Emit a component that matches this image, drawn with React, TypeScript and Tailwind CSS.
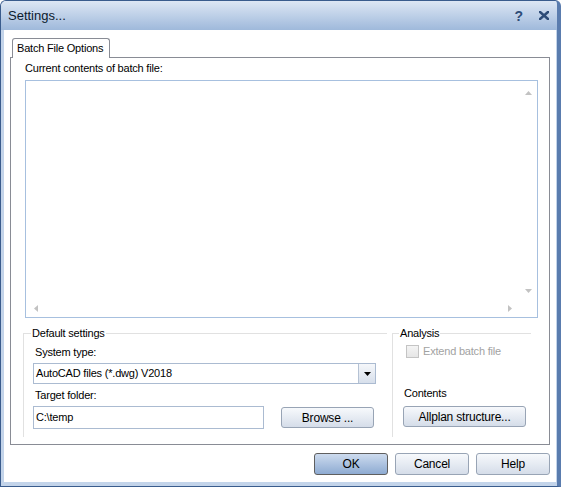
import React from "react";

const font = "font-['Liberation_Sans',Arial,sans-serif]";

function Arrow({ dir, className }: { dir: "up" | "down" | "left" | "right"; className?: string }) {
  const pts = {
    up: "0,4 3.5,0 7,4",
    down: "0,0 7,0 3.5,4",
    left: "4,0 4,7 0,3.5",
    right: "0,0 0,7 4,3.5",
  }[dir];
  const vertical = dir === "up" || dir === "down";
  return (
    <svg
      width={vertical ? 7 : 4}
      height={vertical ? 4 : 7}
      viewBox={vertical ? "0 0 7 4" : "0 0 4 7"}
      className={className}
    >
      <polygon points={pts} fill="currentColor" />
    </svg>
  );
}

function Button({
  children,
  primary,
  className = "",
}: {
  children: React.ReactNode;
  primary?: boolean;
  className?: string;
}) {
  return (
    <button
      className={`flex items-center justify-center rounded-[3px] border text-[12px] tracking-[-0.2px] text-black ${
        primary
          ? "border-[#5f5f5f] bg-linear-to-b from-[#cddbee] to-[#8eabd2]"
          : "border-[#98a4b5] bg-linear-to-b from-[#f7f9fc] to-[#d5dde9]"
      } ${className}`}
    >
      {children}
    </button>
  );
}

export default function App() {
  return (
    <div
      className={`${font} flex h-[487px] w-[561px] flex-col overflow-hidden rounded-t-[6px] border-x border-t border-b border-[#3a5c8d] border-r-[4px] border-r-[#5a7cae] bg-[#c3d4ea] text-[11px] tracking-[-0.2px] text-black`}
    >
      {/* title bar */}
      <div className="flex h-[29px] shrink-0 items-center bg-linear-to-b from-[#dde7f4] to-[#9fb9db] pl-[7px]">
        <span className="text-[13px] tracking-normal text-[#0b1a2e]">Settings...</span>
        <div className="ml-auto flex items-center gap-[16px] pr-[8px]">
          <span className="text-[14px] font-bold leading-none tracking-normal text-[#2e4c78]">?</span>
          <svg width="10" height="9" viewBox="0 0 10 9">
            <path d="M1 1 L9 8 M9 1 L1 8" stroke="#2e4c78" strokeWidth="2.6" strokeLinecap="square" />
          </svg>
        </div>
      </div>

      {/* client */}
      <div className="ml-[3px] mr-[1px] mb-[4px] flex h-[452px] flex-col bg-white">
        <div className="ml-[8px] mt-[8px] flex">
          <div className="relative z-10 flex h-[20px] w-[98px] items-center rounded-t-[3px] border-x border-t border-[#898c95] bg-white pl-[4px]">
            Batch File Options
          </div>
        </div>

        <div className="mx-[6px] -mt-[1px] flex h-[388px] flex-col border border-[#898c95] pl-[14px] pr-[11px] pt-[4px]">
          <div className="h-[13px] leading-[13px]">Current contents of batch file:</div>

          <div className="mt-[5px] grid h-[238px] grid-cols-[1fr_17px] grid-rows-[1fr_17px] border border-[#a7c0df]">
            <div />
            <div className="flex flex-col items-center justify-between pb-[7px] pt-[10px] text-[#c2c2c2]">
              <Arrow dir="up" />
              <Arrow dir="down" />
            </div>
            <div className="flex items-center justify-between pl-[8px] pr-[8px] text-[#c2c2c2]">
              <Arrow dir="left" />
              <Arrow dir="right" />
            </div>
            <div />
          </div>

          <div className="-ml-[2px] mt-[9px] flex">
            <fieldset className="h-[110px] w-[364px] border-l border-t border-[#e1e1e1] pl-[9px]">
              <legend className="-ml-[2px] px-[1px] leading-[13px]">Default settings</legend>
              <div className="mt-[6px] h-[13px] pl-[2px] leading-[13px]">System type:</div>
              <div className="mt-[4px] flex h-[21px] w-[343px] border border-[#abbbd1]">
                <div className="flex flex-1 items-center pl-[2px]">AutoCAD files (*.dwg) V2018</div>
                <div className="flex w-[17px] items-center justify-center border-l border-[#b5c2d4] bg-linear-to-b from-[#f5f7fa] to-[#d7dfeb] text-black">
                  <Arrow dir="down" />
                </div>
              </div>
              <div className="mt-[5px] h-[13px] pl-[2px] leading-[13px]">Target folder:</div>
              <div className="mt-[4px] flex items-start">
                <div className="flex h-[23px] w-[231px] items-center border border-[#abbbd1] pl-[2px]">C:\temp</div>
                <Button className="ml-[17px] mt-[1px] h-[21px] w-[93px]">Browse ...</Button>
              </div>
            </fieldset>

            <fieldset className="ml-[5px] h-[110px] w-[139px] border-l border-t border-[#e1e1e1] pl-[10px]">
              <legend className="-ml-[4px] px-[1px] leading-[13px]">Analysis</legend>
              <div className="mt-[5px] flex h-[13px] items-center">
                <div className="ml-[3px] h-[13px] w-[13px] border border-[#c4c4c4] bg-linear-to-b from-[#f4f4f4] to-[#e6e6e6]" />
                <span className="ml-[4px] leading-[13px] text-[#a2a2a2]">Extend batch file</span>
              </div>
              <div className="ml-[1px] mt-[29px] h-[13px] leading-[13px]">Contents</div>
              <Button className="mt-[6px] h-[21px] w-[123px]">Allplan structure...</Button>
            </fieldset>
          </div>
        </div>

        <div className="mr-[6px] mt-[8px] flex justify-end gap-[7px]">
          <Button primary className="h-[22px] w-[74px]">
            OK
          </Button>
          <Button className="h-[22px] w-[74px]">Cancel</Button>
          <Button className="h-[22px] w-[74px]">Help</Button>
        </div>
      </div>
    </div>
  );
}
